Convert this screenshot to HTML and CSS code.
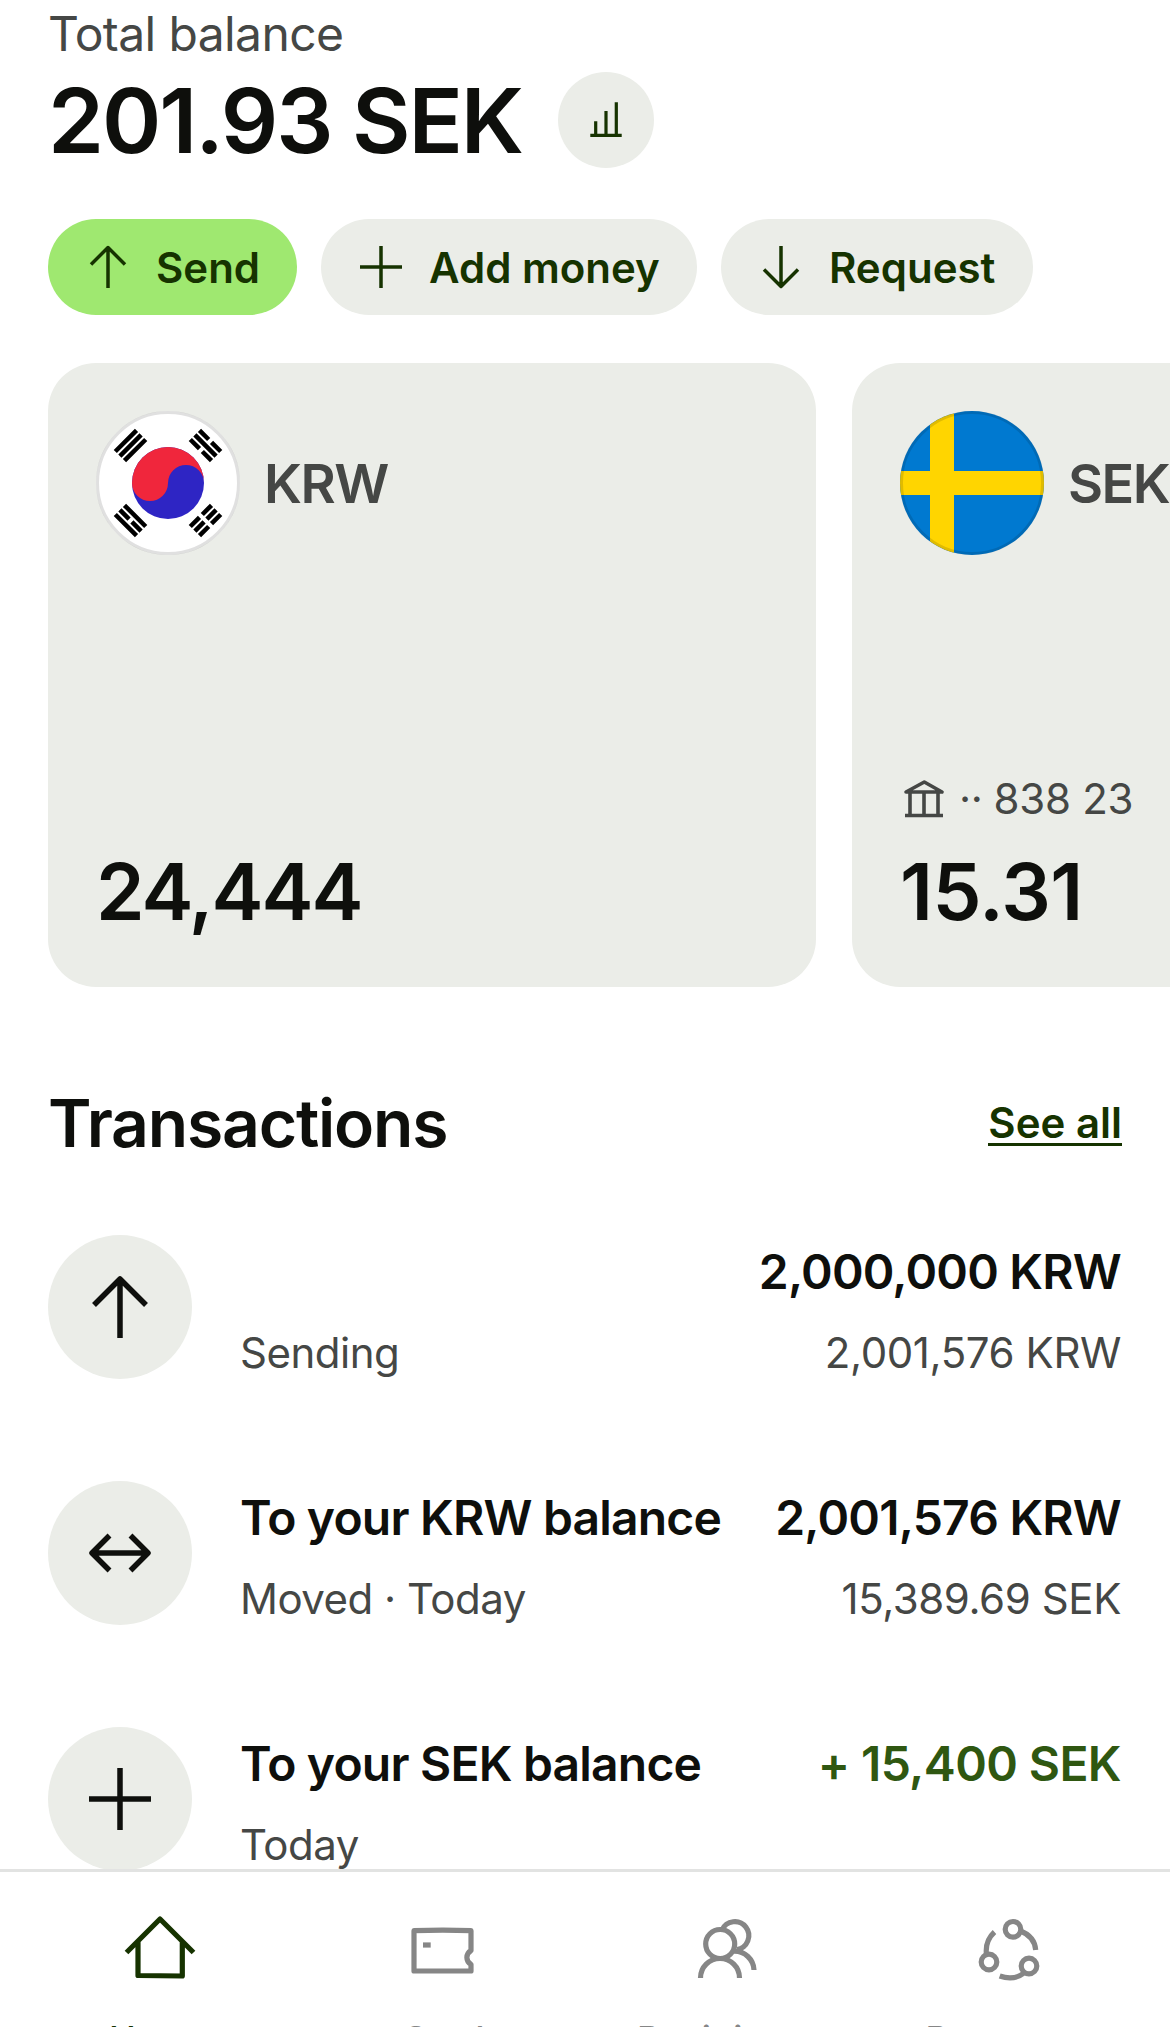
FILE: index.html
```html
<!DOCTYPE html>
<html lang="en">
<head>
    <meta charset="UTF-8">
    <meta name="viewport" content="width=device-width, initial-scale=1.0">
    <title>Home</title>
    <link rel="stylesheet" href="styles.css">
</head>
<body>

    <main class="content">
        <p class="balance-label">Total balance</p>
        <div class="balance-row">
            <h1 class="balance-amount">201.93 SEK</h1>
            <button class="chart-button" aria-label="Insights">
                <svg width="36" height="42" viewBox="0 0 36 42">
                    <path d="M2.300 36.300H33.700M7.700 36V22.300M18 36V12M28.300 36V3.300" />
                </svg>
            </button>
        </div>

        <div class="actions">
            <button class="action send">
                <svg width="42" height="42" viewBox="0 0 42 42"><path d="M21 42V2M4 18.500L21 1.500L38 18.500" /></svg>
                Send
            </button>
            <button class="action add">
                <svg width="42" height="42" viewBox="0 0 42 42"><path d="M21 0V42M0 21H42" /></svg>
                Add money
            </button>
            <button class="action request">
                <svg width="42" height="42" viewBox="0 0 42 42"><path d="M21 0V40M4 23.500L21 40.500L38 23.500" /></svg>
                Request
            </button>
        </div>

        <section class="cards">
            <article class="card krw">
                <div class="card-top">
                    <svg class="flag" width="144" height="144" viewBox="0 0 144 144">
                        <circle cx="72" cy="72" r="72" fill="#fff" />
                        <circle cx="72" cy="72" r="36" fill="#2e25c4" />
                        <path d="M36 72A36 36 0 0 1 108 72A18 18 0 0 0 72 72A18 18 0 0 1 36 72Z" fill="#f0263c" />
                        <g stroke="#000" stroke-width="4.500">
                            <path transform="translate(34.500 34.500) rotate(-45)" d="M-15 -6.500H15M-15 0H15M-15 6.500H15" />
                            <path transform="translate(109.500 34.500) rotate(45)" d="M-15 -6.500H-2M2 -6.500H15M-15 0H15M-15 6.500H-2M2 6.500H15" />
                            <path transform="translate(34.500 109.500) rotate(45)" d="M-15 -6.500H15M-15 0H-2M2 0H15M-15 6.500H15" />
                            <path transform="translate(109.500 109.500) rotate(-45)" d="M-15 -6.500H-2M2 -6.500H15M-15 0H-2M2 0H15M-15 6.500H-2M2 6.500H15" />
                        </g>
                        <circle cx="72" cy="72" r="70.500" fill="none" stroke="#000" stroke-opacity=".12" stroke-width="3" />
                    </svg>
                    <span class="currency">KRW</span>
                </div>
                <div class="amount">24,444</div>
            </article>

            <article class="card">
                <div class="card-top">
                    <svg class="flag" width="144" height="144" viewBox="0 0 144 144">
                        <clipPath id="round"><circle cx="72" cy="72" r="72" /></clipPath>
                        <g clip-path="url(#round)">
                            <path d="M0 0H144V144H0Z" fill="#0079d0" />
                            <path d="M30 0H54V60H144V84H54V144H30V84H0V60H30Z" fill="#ffd500" />
                        </g>
                        <circle cx="72" cy="72" r="70.500" fill="none" stroke="#000" stroke-opacity=".12" stroke-width="3" />
                    </svg>
                    <span class="currency">SEK</span>
                </div>
                <div class="account">
                    <svg width="40" height="40" viewBox="0 0 40 40">
                        <path d="M2 13L20.300 3L38 13ZM6 13V36M20 13V36M34 13V36M1 36.500H39" />
                    </svg>
                    <span class="dots">··</span>
                    <span>838 23</span>
                </div>
                <div class="amount">15.31</div>
            </article>
        </section>

        <section class="transactions">
            <div class="section-head">
                <h2>Transactions</h2>
                <a class="see-all" href="#">See all</a>
            </div>

            <div class="row">
                <div class="row-icon">
                    <svg width="62" height="62" viewBox="0 0 62 62"><path d="M31 62V4M5 29L31 3L57 29" /></svg>
                </div>
                <div class="row-text">
                    <div class="row-title">&nbsp;</div>
                    <div class="row-sub">Sending</div>
                </div>
                <div class="row-values">
                    <div class="row-title">2,000,000 KRW</div>
                    <div class="row-sub">2,001,576 KRW</div>
                </div>
            </div>

            <div class="row">
                <div class="row-icon">
                    <svg width="62" height="62" viewBox="0 0 62 62"><path d="M3 31H59M20.500 13.500L3 31L20.500 48.500M41.500 13.500L59 31L41.500 48.500" /></svg>
                </div>
                <div class="row-text">
                    <div class="row-title">To your KRW balance</div>
                    <div class="row-sub">Moved · Today</div>
                </div>
                <div class="row-values">
                    <div class="row-title">2,001,576 KRW</div>
                    <div class="row-sub">15,389.69 SEK</div>
                </div>
            </div>

            <div class="row">
                <div class="row-icon">
                    <svg width="62" height="62" viewBox="0 0 62 62"><path d="M31 0V62M0 31H62" /></svg>
                </div>
                <div class="row-text">
                    <div class="row-title">To your SEK balance</div>
                    <div class="row-sub">Today</div>
                </div>
                <div class="row-values">
                    <div class="row-title positive">+ 15,400 SEK</div>
                </div>
            </div>
        </section>
    </main>

    <nav class="tab-bar">
        <a class="tab active" href="#">
            <svg width="72" height="72" viewBox="0 0 72 72"><path d="M2.500 42.500L36 9L69.500 42.500M14 31V65.500L58.300 66V31" /></svg>
            <span>Home</span>
        </a>
        <a class="tab" href="#">
            <svg width="72" height="72" viewBox="0 0 72 72"><path d="M7 20.700Q36 19.500 64 20.700V40.500C58.500 44 58.500 51 64 54.500V61H7Z" /><path d="M16 35H23.700" /></svg>
            <span>Card</span>
        </a>
        <a class="tab" href="#">
            <svg width="72" height="72" viewBox="0 0 72 72"><circle cx="29.200" cy="34" r="14.500" /><path d="M9.500 68A19.500 19.500 0 0 1 48.500 68M31 20A14 14 0 1 1 46 39.500M43 41.200A19.500 19.500 0 0 1 63 60" /></svg>
            <span>Recipients</span>
        </a>
        <a class="tab" href="#">
            <svg width="72" height="72" viewBox="0 0 72 72"><circle cx="39" cy="19.300" r="7.800" /><circle cx="15" cy="52" r="7.800" /><circle cx="55" cy="56" r="7.800" /><path d="M12.400 44C11.500 35 14.500 27.500 20.500 22M46.500 21C55.500 24.500 61 31.500 61.700 40M50 63C43 68.500 34 69 25.700 66" /></svg>
            <span>Payments</span>
        </a>
    </nav>

</body>
</html>
```

FILE: styles.css
```css
* {
    box-sizing: border-box;
}

body {
    font-family: Inter, sans-serif;
    margin: 0;
    height: 2027px;
    overflow: hidden;
    background-color: #fff;
    color: #0e0f0c;
    display: flex;
    flex-direction: column;
}

h1, h2, p {
    margin: 0;
}

svg {
    display: block;
    flex: none;
    overflow: visible;
    fill: none;
    stroke: currentColor;
    stroke-linejoin: round;
}

.flag {
    stroke: none;
}

button {
    font-family: inherit;
    border: none;
    padding: 0;
    cursor: pointer;
}

.content {
    height: 1869px;
    padding: 4px 48px 0;
}

.balance-label {
    font-size: 48px;
    line-height: 60px;
    letter-spacing: -0.6px;
    color: #454745;
}

.balance-row {
    display: flex;
    align-items: center;
    gap: 36px;
    height: 96px;
    margin-top: 8px;
}

.balance-amount {
    font-size: 90px;
    line-height: 96px;
    font-weight: 600;
    letter-spacing: -2.1px;
    padding-top: 2px;
}

.chart-button {
    width: 96px;
    height: 96px;
    border-radius: 50%;
    background-color: #ebede8;
    color: #163300;
    display: flex;
    align-items: center;
    justify-content: center;
    stroke-width: 3.2px;
}

.actions {
    display: flex;
    gap: 24px;
    margin-top: 51px;
}

.action {
    display: flex;
    align-items: center;
    gap: 27px;
    height: 96px;
    padding: 0 36px 0 39px;
    border-radius: 48px;
    background-color: #ebede8;
    color: #163300;
    font-size: 42px;
    font-weight: 600;
    stroke-width: 3.5px;
}

.send {
    width: 249px;
    background-color: #9fe870;
}

.add {
    width: 376px;
}

.request {
    width: 312px;
}

.cards {
    display: flex;
    gap: 36px;
    margin-top: 48px;
    margin-right: -48px;
    overflow: hidden;
}

.card {
    flex: none;
    display: flex;
    flex-direction: column;
    width: 768px;
    height: 624px;
    padding: 48px;
    border-radius: 48px;
    background-color: #ebede8;
}

.card-top {
    display: flex;
    align-items: center;
    gap: 24px;
    margin-bottom: auto;
}

.currency {
    font-size: 54px;
    font-weight: 600;
    letter-spacing: -1.5px;
    color: #454745;
}

.account {
    display: flex;
    align-items: center;
    font-size: 42px;
    line-height: 60px;
    letter-spacing: -0.3px;
    margin: 0 0 16px 4px;
    color: #454745;
    stroke-width: 3.6px;
}

.dots {
    margin: 0 11px 0 15px;
}

.amount {
    font-size: 78px;
    line-height: 94px;
    font-weight: 600;
    letter-spacing: -0.6px;
}

.krw .amount {
    letter-spacing: -2px;
}

.section-head {
    display: flex;
    align-items: flex-start;
    justify-content: space-between;
    margin-top: 96px;
    height: 152px;
}

.section-head h2 {
    font-size: 66px;
    line-height: 80px;
    font-weight: 600;
    letter-spacing: -1.2px;
}

.see-all {
    font-size: 42px;
    font-weight: 600;
    color: #163300;
    text-decoration: none;
    line-height: 41px;
    margin-top: 19px;
    border-bottom: 3px solid #163300;
}

.row {
    display: flex;
    height: 144px;
    margin-bottom: 102px;
}

.row-icon {
    display: flex;
    align-items: center;
    justify-content: center;
    flex: none;
    width: 144px;
    height: 144px;
    margin-right: 48px;
    border-radius: 50%;
    background-color: #ebede8;
    stroke-width: 5.5px;
}

.row-text {
    flex: 1;
    padding-top: 1px;
}

.row-values {
    padding: 1px 1px 0 0;
    text-align: right;
}

.row-title {
    font-size: 48px;
    line-height: 72px;
    font-weight: 600;
    letter-spacing: -0.8px;
    white-space: nowrap;
}

.row-sub {
    font-size: 42px;
    line-height: 66px;
    letter-spacing: -0.5px;
    margin-top: 12px;
    color: #454745;
}

.row-values .row-sub {
    letter-spacing: -0.4px;
}

.positive {
    color: #2f5711;
    letter-spacing: -0.6px;
}

.tab-bar {
    display: flex;
    flex: none;
    height: 158px;
    padding: 0 18px;
    background-color: #fff;
    border-top: 3px solid #e2e3e2;
}

.tab {
    flex: 1;
    display: flex;
    flex-direction: column;
    align-items: center;
    padding-top: 38px;
    color: #868686;
    font-size: 36px;
    line-height: 44px;
    font-weight: 500;
    text-decoration: none;
    stroke-width: 5.2px;
}

.tab span {
    margin-top: 35px;
}

.active {
    color: #163300;
}
```
